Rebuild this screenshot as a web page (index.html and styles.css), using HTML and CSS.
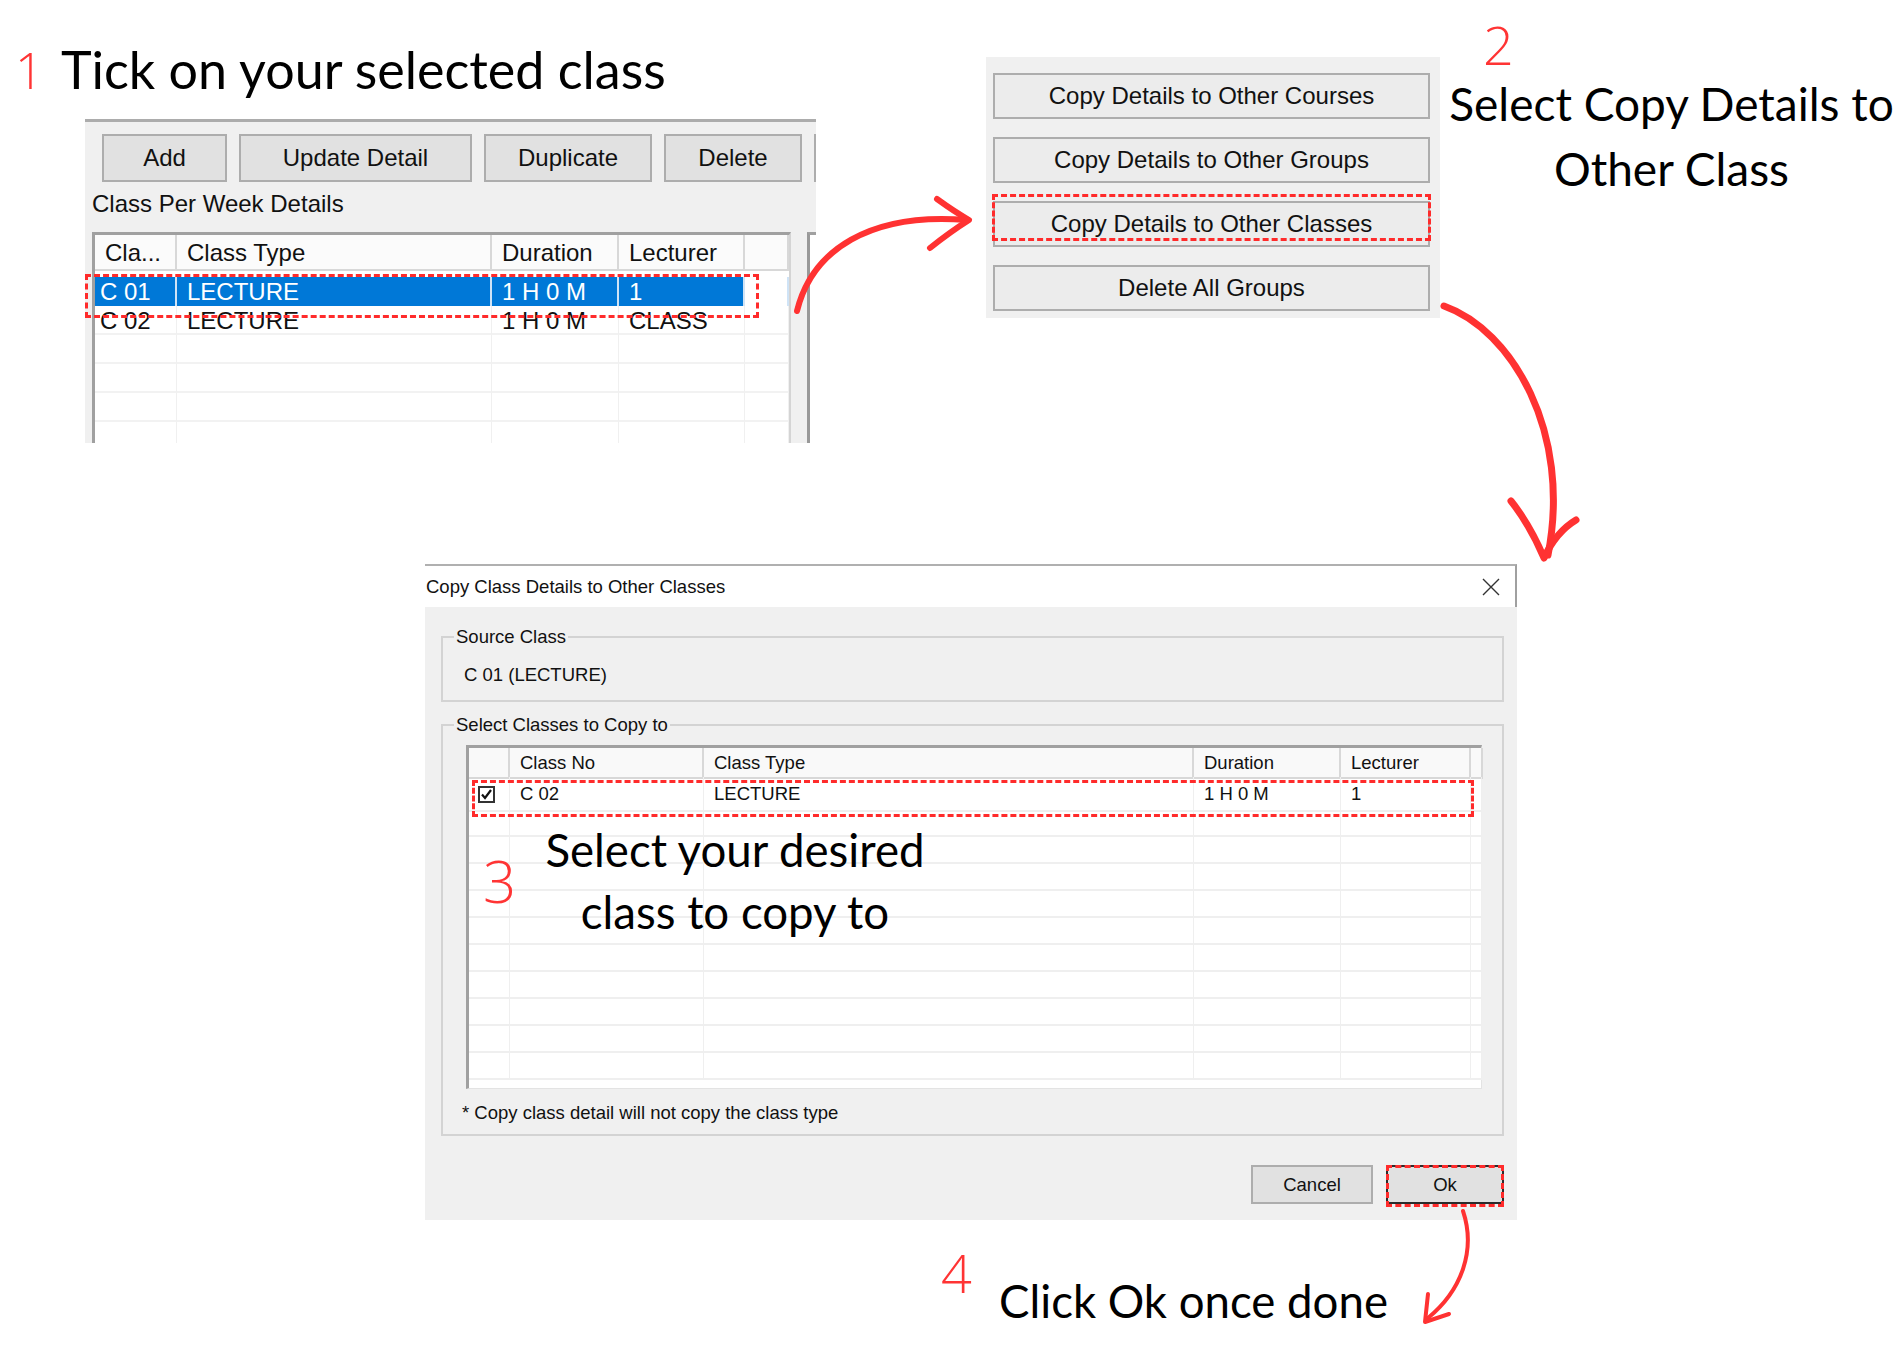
FILE: index.html
```html
<!DOCTYPE html>
<html lang="en">
<head>
  <meta charset="UTF-8" />
  <title>Copy Class Details</title>
  <link rel="stylesheet" href="styles.css">
</head>
<body>
<div class="canvas">

  <h1 class="step step-one"><span class="num">1</span><span>Tick on your selected class</span></h1>

  <!-- class per week window -->
  <div class="win win-list">
    <div class="btn-row">
      <button class="wbtn w-add">Add</button>
      <button class="wbtn w-update">Update Detail</button>
      <button class="wbtn w-dup">Duplicate</button>
      <button class="wbtn w-del">Delete</button>
      <button class="wbtn w-more"></button>
    </div>
    <div class="win-label">Class Per Week Details</div>
    <div class="list-wrap">
      <div class="week-grid">
        <div class="wk-row wk-head">
          <div class="c">Cla...</div>
          <div class="c">Class Type</div>
          <div class="c">Duration</div>
          <div class="c">Lecturer</div>
          <div class="c"></div>
        </div>
        <div class="wk-row sel">
          <div class="c c-first">C 01</div>
          <div class="c">LECTURE</div>
          <div class="c">1 H 0 M</div>
          <div class="c">1</div>
          <div class="c c-pad"></div>
        </div>
        <div class="wk-row">
          <div class="c c-first">C 02</div>
          <div class="c">LECTURE</div>
          <div class="c">1 H 0 M</div>
          <div class="c">CLASS</div>
          <div class="c c-pad"></div>
        </div>
        <div class="wk-row"><div class="c"></div><div class="c"></div><div class="c"></div><div class="c"></div><div class="c c-pad"></div></div>
        <div class="wk-row"><div class="c"></div><div class="c"></div><div class="c"></div><div class="c"></div><div class="c c-pad"></div></div>
        <div class="wk-row"><div class="c"></div><div class="c"></div><div class="c"></div><div class="c"></div><div class="c c-pad"></div></div>
        <div class="wk-row"><div class="c"></div><div class="c"></div><div class="c"></div><div class="c"></div><div class="c c-pad"></div></div>
      </div>
      <div class="side-list"></div>
    </div>
  </div>

  <!-- copy options window -->
  <div class="win win-copy">
    <button class="cbtn">Copy Details to Other Courses</button>
    <button class="cbtn">Copy Details to Other Groups</button>
    <button class="cbtn hl">Copy Details to Other Classes</button>
    <button class="cbtn">Delete All Groups</button>
  </div>

  <div class="step step-two">
    <span class="num">2</span>
    <div>Select Copy Details to</div>
    <div>Other Class</div>
  </div>

  <!-- dialog -->
  <div class="dialog">
    <div class="dlg-title">
      <span>Copy Class Details to Other Classes</span>
      <svg class="dlg-close" width="18" height="18" viewBox="0 0 18 18">
        <path d="M1 1 L17 17 M17 1 L1 17" stroke="#333" stroke-width="1.4" fill="none"/>
      </svg>
    </div>
    <div class="dlg-body">
      <div class="group group-src">
        <span class="legend">Source Class</span>
        C 01 (LECTURE)
      </div>
      <div class="group group-sel">
        <span class="legend">Select Classes to Copy to</span>
        <div class="cls-grid">
          <div class="cls-row cls-head">
            <div class="c"></div>
            <div class="c">Class No</div>
            <div class="c">Class Type</div>
            <div class="c">Duration</div>
            <div class="c">Lecturer</div>
            <div class="c"></div>
          </div>
          <div class="cls-row hl">
            <div class="c"><span class="chk">
              <svg width="13" height="13" viewBox="0 0 13 13"><path d="M2 6.5 L5 10 L11 2" stroke="#111" stroke-width="2.2" fill="none"/></svg>
            </span></div>
            <div class="c">C 02</div>
            <div class="c">LECTURE</div>
            <div class="c">1 H 0 M</div>
            <div class="c">1</div>
            <div class="c"></div>
          </div>
          <div class="cls-row"><div class="c"></div><div class="c"></div><div class="c"></div><div class="c"></div><div class="c"></div><div class="c"></div></div>
          <div class="cls-row"><div class="c"></div><div class="c"></div><div class="c"></div><div class="c"></div><div class="c"></div><div class="c"></div></div>
          <div class="cls-row"><div class="c"></div><div class="c"></div><div class="c"></div><div class="c"></div><div class="c"></div><div class="c"></div></div>
          <div class="cls-row"><div class="c"></div><div class="c"></div><div class="c"></div><div class="c"></div><div class="c"></div><div class="c"></div></div>
          <div class="cls-row"><div class="c"></div><div class="c"></div><div class="c"></div><div class="c"></div><div class="c"></div><div class="c"></div></div>
          <div class="cls-row"><div class="c"></div><div class="c"></div><div class="c"></div><div class="c"></div><div class="c"></div><div class="c"></div></div>
          <div class="cls-row"><div class="c"></div><div class="c"></div><div class="c"></div><div class="c"></div><div class="c"></div><div class="c"></div></div>
          <div class="cls-row"><div class="c"></div><div class="c"></div><div class="c"></div><div class="c"></div><div class="c"></div><div class="c"></div></div>
          <div class="cls-row"><div class="c"></div><div class="c"></div><div class="c"></div><div class="c"></div><div class="c"></div><div class="c"></div></div>
          <div class="cls-row"><div class="c"></div><div class="c"></div><div class="c"></div><div class="c"></div><div class="c"></div><div class="c"></div></div>
        </div>
        <div class="footnote">* Copy class detail will not copy the class type</div>
      </div>
      <div class="dlg-actions">
        <button class="dbtn dbtn-cancel">Cancel</button>
        <button class="dbtn dbtn-ok">Ok</button>
      </div>
    </div>
  </div>

  <div class="step step-three">
    <span class="num">3</span>
    <div class="lines">
      <div>Select your desired</div>
      <div>class to copy to</div>
    </div>
  </div>

  <div class="step step-four">
    <span class="num">4</span>
    <span class="text">Click Ok once done</span>
  </div>

  <!-- hand drawn arrows -->
  <svg class="arrows" width="1903" height="1345" viewBox="0 0 1903 1345">
    <g stroke="#ff3232" fill="none" stroke-linecap="round" stroke-linejoin="round">
      <path d="M797 311 C812 250 870 212 967 220" stroke-width="6"/>
      <path d="M937 199 Q955 212 969 220 Q950 232 930 248" stroke-width="6"/>
      <path d="M1444 306 C1512 330 1572 432 1548 555" stroke-width="7"/>
      <path d="M1511 501 Q1530 525 1544 558 Q1556 532 1576 520" stroke-width="7"/>
      <path d="M1463 1211 C1476 1250 1462 1290 1428 1318" stroke-width="4"/>
      <path d="M1428 1294 L1425 1322 L1449 1314" stroke-width="4"/>
    </g>
  </svg>
</div>
</body>
</html>
```

FILE: styles.css
```css
* { box-sizing: border-box; }
body {
  margin: 0;
  background: #fff;
}
.canvas {
  position: relative;
  width: 1903px;
  height: 1345px;
  overflow: hidden;
  font-family: "Liberation Sans", Arial, sans-serif;
  color: #111;
}

/* annotation text */
.step {
  position: absolute;
  margin: 0;
  font-family: Lato, "Open Sans", sans-serif;
  font-weight: 400;
  color: #000;
  white-space: nowrap;
}
.num {
  font-family: "Open Sans", Lato, sans-serif;
  color: #ff3434;
  font-weight: 300;
}

.step-one {
  left: 15px; top: 38px;
  display: flex;
  align-items: baseline;
  font-size: 52px;
  line-height: 1.2;
}
.step-one .num { width: 46px; font-size: 50px; }

.step-two {
  left: 1440px; top: 17px;
  width: 463px;
  font-size: 46px;
  line-height: 65px;
  text-align: center;
}
.step-two .num {
  display: block;
  text-align: left;
  margin-left: 43px;
  font-size: 54px;
  line-height: 54px;
}

.step-three {
  left: 483px; top: 819px;
  display: flex;
  font-size: 45.6px;
  line-height: 62px;
}
.step-three .num { width: 57px; margin-top: 34px; font-size: 58px; line-height: 56px; }
.step-three .lines { width: 390px; text-align: center; }

.step-four {
  left: 941px; top: 1245px;
  display: flex;
  font-size: 45.6px;
  line-height: 1.2;
}
.step-four .num { width: 58px; font-size: 54px; line-height: 54px; }
.step-four .text { margin-top: 29px; }

/* windows screenshots */
.win {
  position: absolute;
  background: #f0f0f0;
  overflow: hidden;
}
.win-list {
  left: 85px; top: 119px;
  width: 731px; height: 324px;
  border-top: 3px solid #acacac;
}
.btn-row {
  display: flex;
  gap: 12px;
  margin: 12px 0 0 17px;
}
.wbtn, .cbtn, .dbtn {
  flex: none;
  padding: 0;
  background: #e1e1e1;
  border: 2px solid #adadad;
  font-family: "Liberation Sans", Arial, sans-serif;
  color: #111;
}
.wbtn { height: 48px; font-size: 24px; }
.w-add { width: 125px; }
.w-update { width: 233px; }
.w-dup { width: 168px; }
.w-del { width: 138px; }
.w-more { width: 60px; }

.win-label {
  margin: 8px 0 0 7px;
  font-size: 24px;
  line-height: 28px;
}
.list-wrap {
  display: flex;
  gap: 16px;
  margin: 14px 0 0 7px;
}
.week-grid {
  flex: none;
  width: 699px;
  height: 230px;
  background: #fff;
  border-top: 3px solid #a0a0a0;
  border-left: 3px solid #a0a0a0;
  border-right: 2px solid #d4d4d4;
}
.side-list {
  flex: none;
  width: 40px;
  height: 230px;
  background: #fff;
  border-top: 3px solid #a0a0a0;
  border-left: 3px solid #999;
}
.wk-row {
  display: grid;
  grid-template-columns: 82px 315px 127px 126px 1fr;
  height: 29px;
  font-size: 24px;
  line-height: 29px;
}
.wk-row .c {
  padding-left: 10px;
  white-space: nowrap;
  overflow: hidden;
  border-right: 1px solid #f0f0f0;
  border-bottom: 2px solid #f2f2f2;
}
.wk-row .c-first { padding-left: 5px; }
.wk-head {
  height: 36px;
  line-height: 36px;
  margin-bottom: 6px;
  background: #fbfbfb;
}
.wk-head .c { border-right: 2px solid #d8d8d8; border-bottom: 2px solid #d8d8d8; }
.sel { position: relative; }
.sel .c { background: #0078d7; color: #fff; border-right: 2px solid #cfe3f6; border-bottom: none; }
.sel .c-pad { background: #fff; }
.sel::after {
  content: "";
  position: absolute;
  left: -10px; top: -3px;
  width: 668px; height: 38px;
  border: 3px dashed #ff2b2b;
}

.win-copy {
  left: 986px; top: 57px;
  width: 454px; height: 261px;
  padding: 16px 0 0 7px;
  display: flex;
  flex-direction: column;
  gap: 18px;
}
.cbtn { width: 437px; height: 46px; font-size: 24px; background: #ececec; }
.cbtn.hl { position: relative; }
.cbtn.hl::after {
  content: "";
  position: absolute;
  left: -3px; right: -3px; top: -9px; bottom: 4px;
  border: 3px dashed #ff2b2b;
}

/* dialog */
.dialog {
  position: absolute;
  left: 425px; top: 564px;
  width: 1092px; height: 656px;
  background: #f0f0f0;
  font-size: 18.5px;
}
.dlg-title {
  height: 43px;
  display: flex;
  align-items: center;
  justify-content: space-between;
  padding: 0 15px 0 1px;
  background: #fff;
  border-top: 2px solid #b0b0b0;
  border-right: 2px solid #a0a0a0;
}
.dlg-body { padding: 29px 13px 0 16px; }
.group {
  position: relative;
  border: 2px solid #d3d3d3;
  line-height: 22px;
}
.legend {
  position: absolute;
  top: -12px; left: 11px;
  padding: 0 2px;
  background: #f0f0f0;
}
.group-src { height: 66px; padding: 26px 0 0 21px; }
.group-sel { height: 412px; margin-top: 22px; padding: 19px 20px 0 23px; }

.cls-grid {
  height: 344px;
  background: #fff;
  border-top: 3px solid #a0a0a0;
  border-left: 3px solid #a0a0a0;
  border-right: 1px solid #e3e3e3;
  border-bottom: 1px solid #e3e3e3;
}
.cls-row {
  display: grid;
  grid-template-columns: 41px 194px 490px 147px 130px 1fr;
  height: 27px;
  line-height: 27px;
}
.cls-row .c {
  padding-left: 10px;
  white-space: nowrap;
  border-right: 1px solid #efefef;
  border-bottom: 2px solid #efefef;
}
.cls-head { height: 29px; line-height: 29px; background: #f9f9f9; }
.cls-head .c { border-right: 2px solid #d8d8d8; border-bottom: 2px solid #d8d8d8; }
.cls-row.hl { position: relative; height: 33px; line-height: 33px; }
.cls-row.hl::after {
  content: "";
  position: absolute;
  left: 3px; top: 3px;
  width: 996px; height: 31px;
  border: 3px dashed #ff2b2b;
}
.cls-row .c:first-child { padding-left: 0; }
.chk {
  display: block;
  width: 17px; height: 17px;
  margin: 9px 0 0 9px;
  border: 2px solid #333;
  background: #fff;
}
.chk svg { display: block; margin: 0; }

.footnote { margin: 13px 0 0 -4px; }

.dlg-actions {
  display: flex;
  justify-content: flex-end;
  gap: 13px;
  margin-top: 29px;
}
.dbtn { height: 39px; font-size: 18.5px; }
.dbtn-cancel { width: 122px; }
.dbtn-ok { width: 118px; border-color: #2b2b2b; position: relative; }
.dbtn-ok::after {
  content: "";
  position: absolute;
  left: -2px; right: -2px; top: -2px; bottom: -5px;
  border: 3px dashed #ff2b2b;
}

.arrows {
  position: absolute;
  left: 0; top: 0;
  pointer-events: none;
}
```
